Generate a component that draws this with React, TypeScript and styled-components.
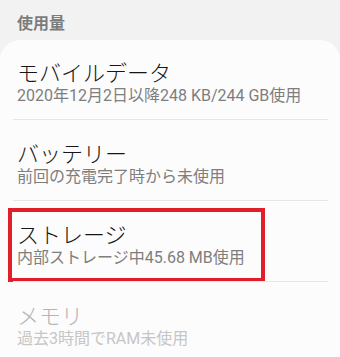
import { FC } from "react";
import styled, { createGlobalStyle } from "styled-components";

const GlobalStyle = createGlobalStyle`
  html, body {
    margin: 0;
    padding: 0;
    background: #f2f2f2;
  }
  body {
    font-family: "Noto Sans CJK JP", "Noto Sans", sans-serif;
    overflow: hidden;
  }
`;

const Page = styled.div`
  width: 340px;
  height: 357px;
  display: flex;
  flex-direction: column;
  background: #f2f2f2;
`;

const SectionTitle = styled.h2`
  margin: 0;
  padding: 12px 17px 8px;
  font-size: 16px;
  line-height: 20px;
  font-weight: 700;
  color: #7c7c7c;
`;

const Card = styled.div`
  background: #fcfcfc;
  border-radius: 20px 20px 0 0;
  display: flex;
  flex-direction: column;
  flex: 1;
`;

const Row = styled.div<{ $last?: boolean }>`
  position: relative;
  height: 80px;
  padding: 17px 17px 0;
  box-sizing: border-box;
  display: flex;
  flex-direction: column;
  &::after {
    content: "";
    display: ${(p) => (p.$last ? "none" : "block")};
    position: absolute;
    left: 13px;
    right: 12px;
    bottom: 0;
    height: 1px;
    background: #e6e6e6;
  }
  & + & {
    margin-top: 1px;
  }
`;

const Title = styled.div<{ $dim?: boolean }>`
  font-size: 22px;
  line-height: 28px;
  font-weight: 300;
  color: ${(p) => (p.$dim ? "#b4b4b4" : "#161616")};
  white-space: nowrap;
`;

const Sub = styled.div<{ $dim?: boolean }>`
  font-family: Roboto, "Noto Sans CJK JP", sans-serif;
  font-size: 16px;
  line-height: 22px;
  color: ${(p) => (p.$dim ? "#c6c6c6" : "#7e7e7e")};
  white-space: nowrap;
`;

// red annotation frame drawn over the storage row
const Highlight = styled.div`
  position: absolute;
  left: 8px;
  top: 6px;
  width: 257px;
  height: 74px;
  box-sizing: border-box;
  border: 4px solid #e11f2b;
  pointer-events: none;
`;

const items = [
  { title: "モバイルデータ", sub: "2020年12月2日以降248 KB/244 GB使用" },
  { title: "バッテリー", sub: "前回の充電完了時から未使用" },
  { title: "ストレージ", sub: "内部ストレージ中45.68 MB使用", mark: true },
  { title: "メモリ", sub: "過去3時間でRAM未使用", dim: true },
];

const App: FC = () => {
  return (
    <Page>
      <GlobalStyle />
      <SectionTitle>使用量</SectionTitle>
      <Card>
        {items.map((it, i) => (
          <Row key={it.title} $last={i === items.length - 1}>
            <Title $dim={it.dim}>{it.title}</Title>
            <Sub $dim={it.dim}>{it.sub}</Sub>
            {it.mark && <Highlight />}
          </Row>
        ))}
      </Card>
    </Page>
  );
};

export default App;
